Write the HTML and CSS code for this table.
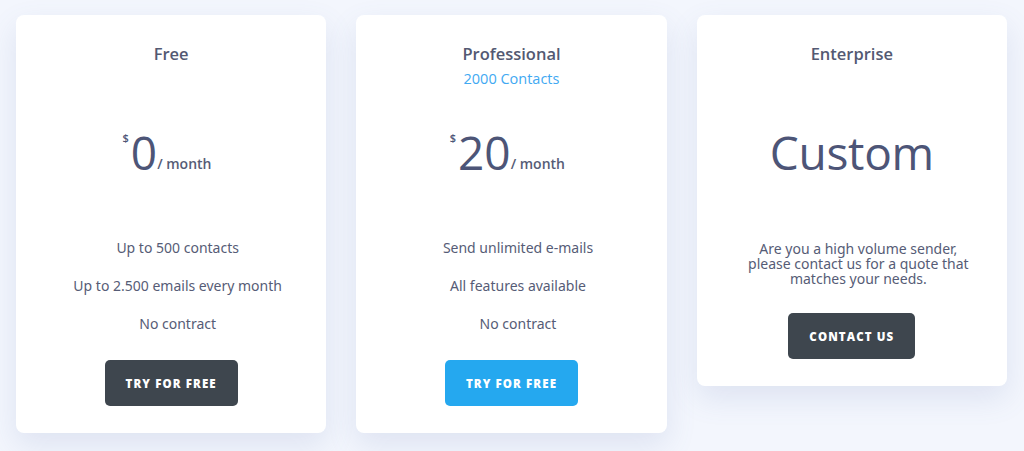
FILE: index.html
```html
<!DOCTYPE html>
<html lang="en">
<head>
<meta charset="utf-8">
<title>Pricing</title>
<link rel="stylesheet" href="styles.css">
</head>
<body>
<main class="plans">
  <section class="card">
    <header class="card-head">
      <h2 class="title">Free</h2>
      <p class="subtitle"></p>
    </header>
    <div class="price">
      <span class="amount"><span class="currency">$</span>0</span><span class="period">/ month</span>
    </div>
    <ul class="features">
      <li>Up to 500 contacts</li>
      <li>Up to 2.500 emails every month</li>
      <li>No contract</li>
    </ul>
    <a class="btn btn-dark" href="#">TRY FOR FREE</a>
  </section>
  <section class="card">
    <header class="card-head">
      <h2 class="title">Professional</h2>
      <p class="subtitle">2000 Contacts</p>
    </header>
    <div class="price">
      <span class="amount"><span class="currency">$</span>20</span><span class="period">/ month</span>
    </div>
    <ul class="features">
      <li>Send unlimited e-mails</li>
      <li>All features available</li>
      <li>No contract</li>
    </ul>
    <a class="btn btn-blue" href="#">TRY FOR FREE</a>
  </section>
  <section class="card">
    <header class="card-head">
      <h2 class="title">Enterprise</h2>
      <p class="subtitle"></p>
    </header>
    <div class="price">
      <span class="custom">Custom</span>
    </div>
    <p class="note">Are you a high volume sender, please contact us for a quote that matches your needs.</p>
    <a class="btn btn-dark btn-contact" href="#">CONTACT US</a>
  </section>
</main>
</body>
</html>
```

FILE: styles.css
```css
* { box-sizing: border-box; }
html, body { margin: 0; padding: 0; }
body {
  background: #f3f6fd;
  font-family: "Noto Sans", "Lato", sans-serif;
  color: #565c76;
  height: 451px;
  overflow: hidden;
}
.plans {
  display: grid;
  grid-template-columns: repeat(3, 1fr);
  gap: 30px;
  padding: 15px 17px 0 16px;
  align-items: start;
}
.card {
  background: #fff;
  border-radius: 8px;
  box-shadow: 0 12px 30px rgba(90, 110, 170, 0.14);
  padding: 28px 20px 27px;
  display: flex;
  flex-direction: column;
  align-items: center;
  text-align: center;
}
.card-head { height: 46px; }
.title {
  margin: 0;
  font-family: "Open Sans", sans-serif;
  font-weight: 600;
  font-size: 16.5px;
  line-height: 22px;
  color: #535972;
}
.subtitle {
  margin: 4px 0 0;
  font-family: "Open Sans", sans-serif;
  font-size: 14.5px;
  line-height: 20px;
  height: 20px;
  color: #41a9f2;
}
.price {
  height: 126px;
  display: flex;
  align-items: center;
  justify-content: center;
  color: #4d5577;
}
.amount {
  position: relative;
  font-family: "Open Sans", sans-serif;
  font-size: 46px;
  line-height: 46px;
}
.currency {
  position: absolute;
  right: 100%;
  top: 2px;
  margin-right: 2px;
  font-size: 11px;
  line-height: 14px;
  font-weight: 600;
}
.period {
  font-family: "Open Sans", sans-serif;
  font-size: 14px;
  font-weight: 600;
  margin-top: 22px;
  color: #565c76;
}
.custom {
  font-family: "Open Sans", sans-serif;
  font-size: 46px;
  line-height: 48px;
  letter-spacing: -0.3px;
}
.features {
  list-style: none;
  margin: 23px 0 0;
  padding: 0 0 0 13px;
  display: flex;
  flex-direction: column;
  gap: 18px;
}
.features li {
  font-size: 14px;
  line-height: 20px;
}
.note {
  margin: 25.5px 0 0;
  padding-left: 13px;
  max-width: 245px;
  font-size: 14px;
  line-height: 15px;
}
.btn {
  margin-top: 26px;
  height: 46px;
  padding: 0 21px;
  display: inline-flex;
  align-items: center;
  border-radius: 5px;
  font-family: "Open Sans", sans-serif;
  font-weight: 800;
  font-size: 11.5px;
  letter-spacing: 1.1px;
  color: #fff;
  text-decoration: none;
}
.btn-contact { margin-top: 27.5px; }
.btn-dark { background: #3e464e; }
.btn-blue { background: #25a8ef; }
```
